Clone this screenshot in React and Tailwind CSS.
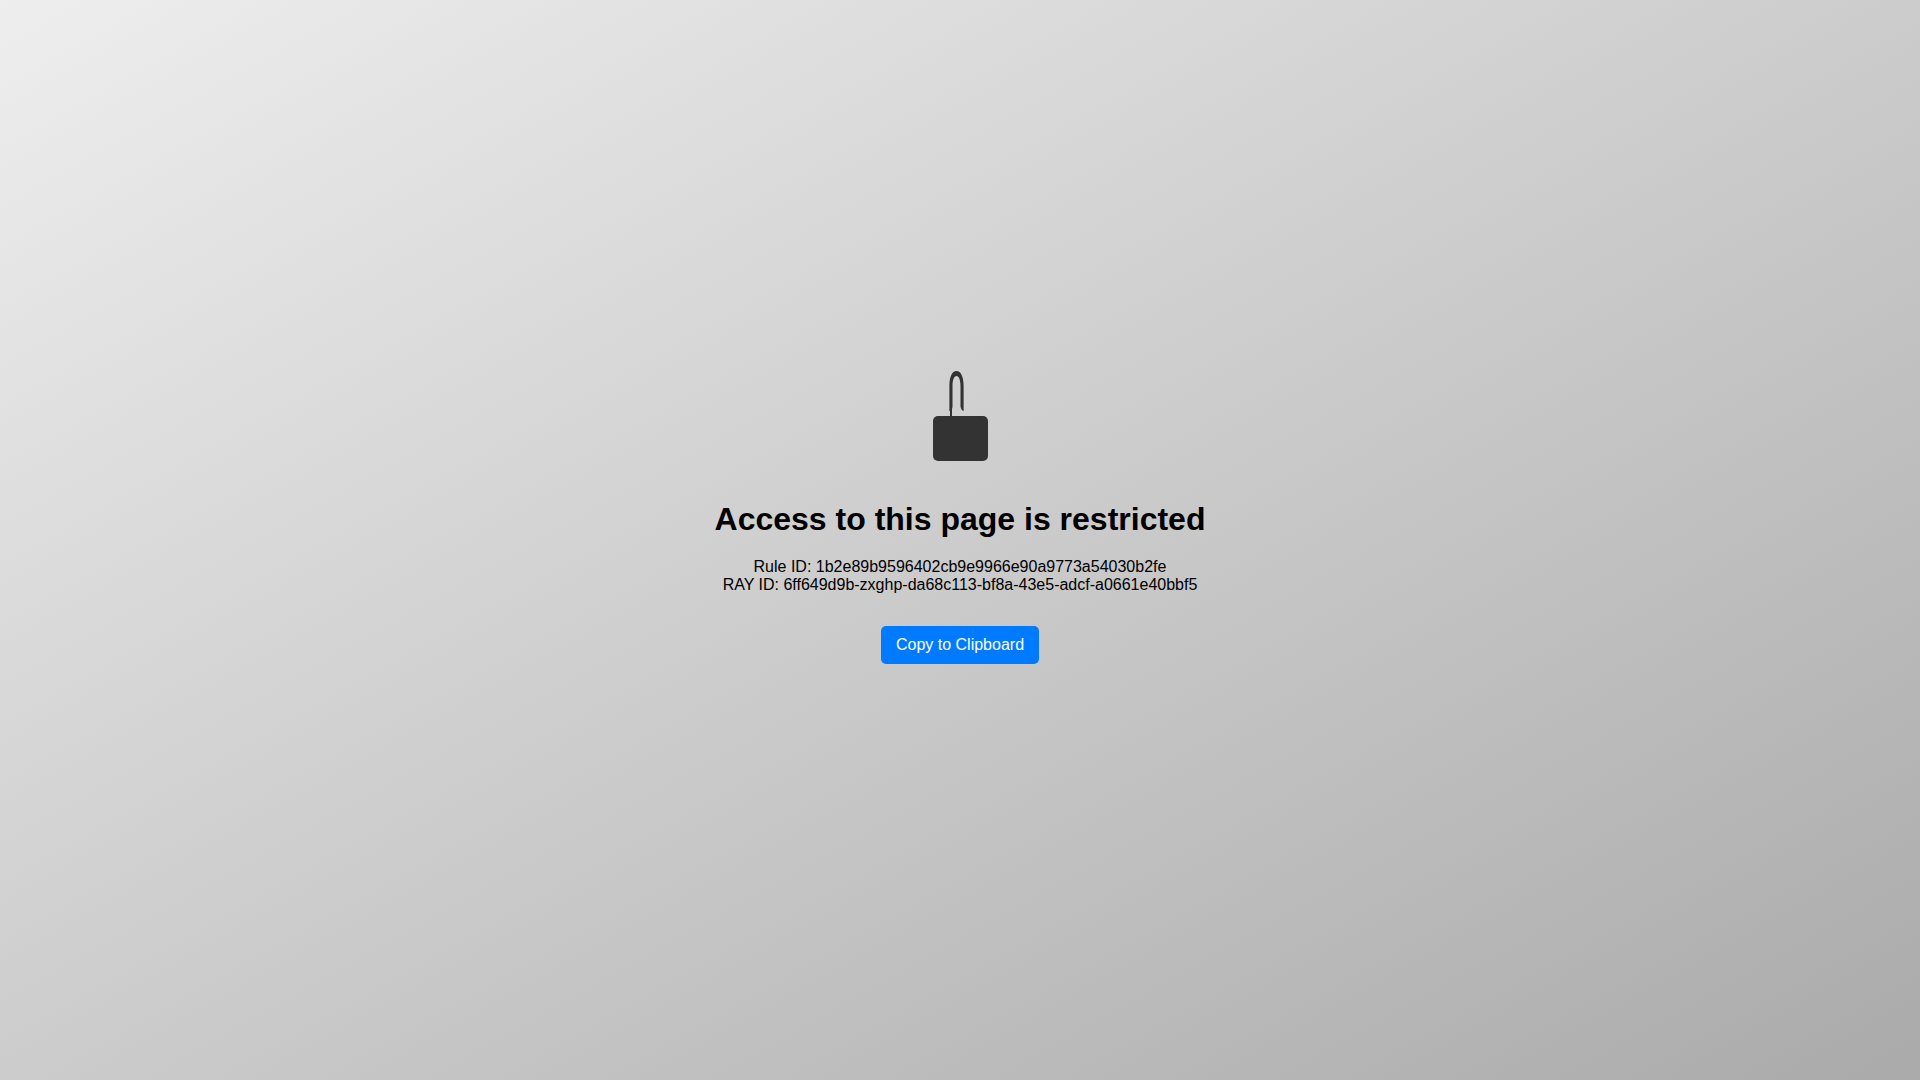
import React, { useState } from 'react';

const RULE_ID = '1b2e89b9596402cb9e9966e90a9773a54030b2fe';
const RAY_ID = '6ff649d9b-zxghp-da68c113-bf8a-43e5-adcf-a0661e40bbf5';

const LockIcon = () => (
    <svg width="55" height="90" viewBox="0 0 55 90" fill="#333" aria-hidden="true">
        {/* Shackle */}
        <path d="M17 45V40H16.4V15C16.4 6 19 0 23.5 0S30.6 6 30.6 15V40C29 39.5 28 38 28 37L27.5 36V15C27.5 9 26 5 23.5 5S19.5 9 19.5 15V36L19 38V45Z" />
        {/* Body */}
        <rect y="45" width="55" height="45" rx="5" />
    </svg>
);

const App = () => {
    const [copied, setCopied] = useState(false);

    const handleCopy = async () => {
        try {
            await navigator.clipboard.writeText(`Rule ID: ${RULE_ID}\nRAY ID: ${RAY_ID}`);
            setCopied(true);
        } catch (error) {
            console.error('Copy error:', error);
        }
    };

    return (
        <main className="min-h-screen pb-[45px] flex flex-col items-center justify-center text-center text-black font-['Liberation_Sans',Arial,sans-serif] bg-[linear-gradient(to_bottom_right,#eee,#aaa)]">
            <LockIcon />
            <h1 className="mt-10 mb-[21px] text-[32px] leading-9 font-bold">Access to this page is restricted</h1>
            <p className="text-base leading-[18px]">
                Rule ID: {RULE_ID}
                <br />
                RAY ID: {RAY_ID}
            </p>
            <button
                onClick={handleCopy}
                className="mt-8 px-[15px] py-[10px] text-base leading-[18px] text-white bg-[#007bff] rounded-[5px] cursor-pointer"
            >
                {copied ? 'Copied' : 'Copy to Clipboard'}
            </button>
        </main>
    );
};

export default App;
